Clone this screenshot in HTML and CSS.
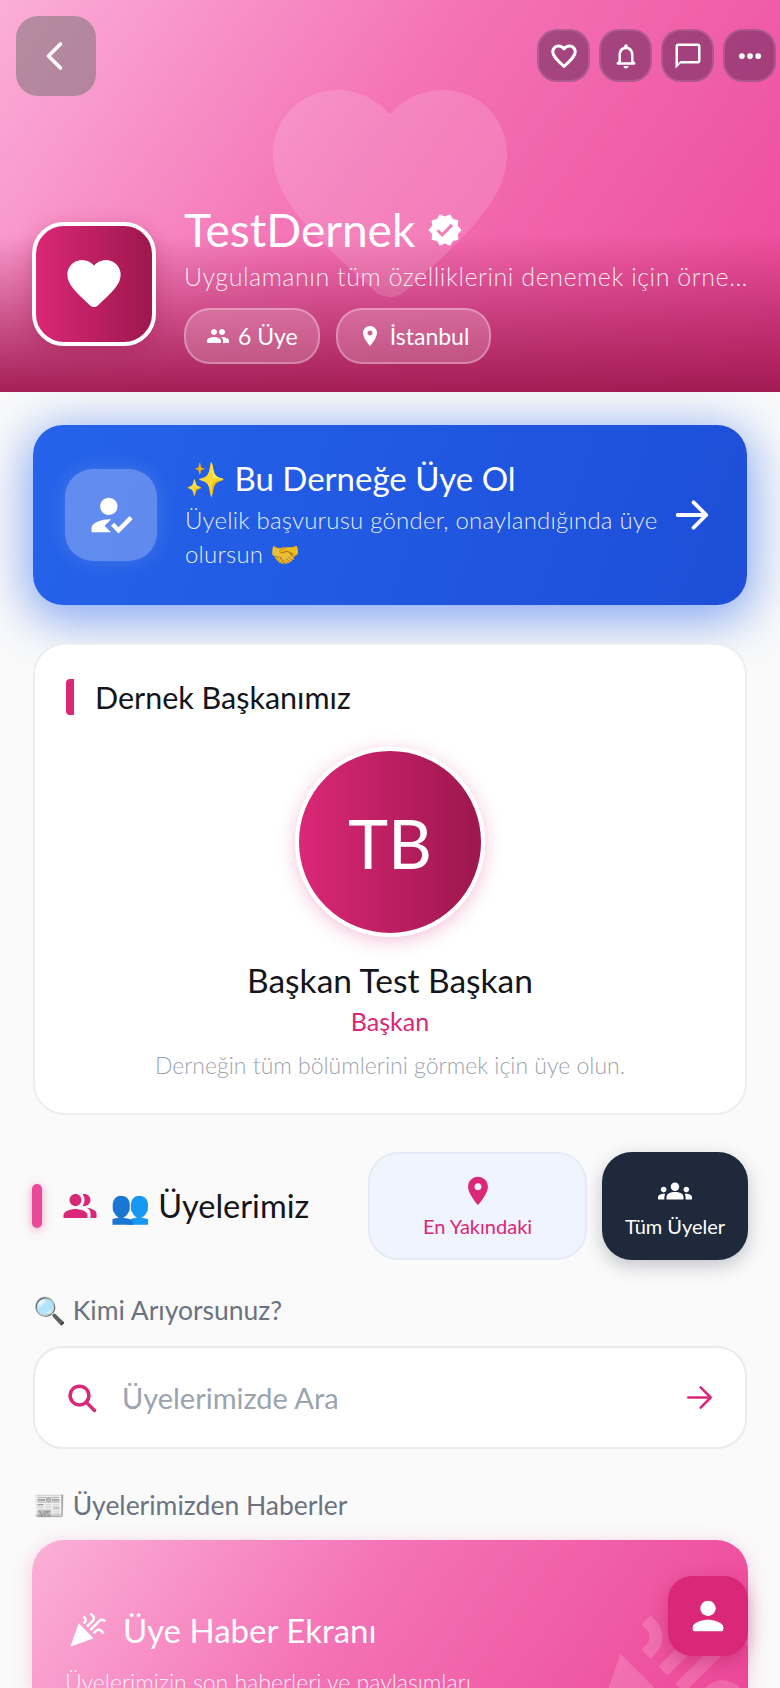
FILE: index.html
```html
<!DOCTYPE html>
<html lang="tr">
  <head>
    <meta charset="utf-8" />
    <title>TestDernek</title>
    <link rel="stylesheet" href="styles.css">
  </head>
  <body>
    <header class="hero">
      <svg class="hero-watermark" viewBox="2 3 20 17.65" preserveAspectRatio="none"><path d="M13.35 20.13c-.76.69-1.93.69-2.69-.01l-.11-.1C5.3 15.27 1.87 12.16 2 8.28c.06-1.7.93-3.33 2.34-4.29 2.64-1.8 5.9-.96 7.66 1.1 1.76-2.06 5.02-2.91 7.66-1.1 1.41.96 2.28 2.59 2.34 4.29.14 3.88-3.3 6.99-8.55 11.76l-.1.09z"/></svg>
      <div class="hero-top">
        <button class="back-btn">
          <svg viewBox="0 0 24 24" class="line-icon"><path d="M15 4l-8 8 8 8"/></svg>
        </button>
        <div class="hero-actions">
          <button class="action-btn">
            <svg viewBox="0 0 24 24" class="line-icon"><path d="M12 20.3l-1.2-1.1C6 14.8 3 12 3 8.6 3 6 5.1 4 7.6 4c1.7 0 3.400.9 4.400 2.300C13 4.900 14.700 4 16.400 4 18.900 4 21 6 21 8.600c0 3.400-3 6.200-7.800 10.600L12 20.300z"/></svg>
          </button>
          <button class="action-btn">
            <svg viewBox="0 0 24 24" class="fill-icon"><path d="M19.290 17.290L18 16v-5c0-3.070-1.640-5.640-4.500-6.320V4c0-.83-.67-1.500-1.500-1.500s-1.500.67-1.500 1.500v.68C7.630 5.360 6 7.920 6 11v5l-1.290 1.290c-.63.63-.19 1.710.7 1.710h13.170c.9 0 1.340-1.080.71-1.710zM16 17H8v-6c0-2.480 1.510-4.500 4-4.500s4 2.020 4 4.500v6zm-4 5c1.100 0 2-.9 2-2h-4c0 1.100.9 2 2 2z"/></svg>
          </button>
          <button class="action-btn">
            <svg viewBox="0 0 24 24" class="fill-icon"><path d="M20 2H4c-1.100 0-2 .9-2 2v18l4-4h14c1.100 0 2-.9 2-2V4c0-1.100-.9-2-2-2zm0 14H6l-2 2V4h16v12z"/></svg>
          </button>
          <button class="action-btn">
            <svg viewBox="0 0 24 24" class="fill-icon"><circle cx="5.500" cy="12" r="2.300"/><circle cx="12" cy="12" r="2.300"/><circle cx="18.500" cy="12" r="2.300"/></svg>
          </button>
        </div>
      </div>
      <div class="hero-info">
        <div class="org-logo">
          <svg viewBox="0 0 24 24" class="fill-icon"><path d="M13.350 20.130c-.76.69-1.930.69-2.690-.01l-.11-.1C5.300 15.270 1.870 12.160 2 8.280c.06-1.700.93-3.330 2.340-4.290 2.640-1.800 5.900-.96 7.660 1.100 1.760-2.060 5.020-2.910 7.660-1.100 1.410.96 2.280 2.590 2.340 4.290.14 3.880-3.300 6.990-8.550 11.760l-.1.09z"/></svg>
        </div>
        <div class="org-text">
          <h1 class="org-name">TestDernek
            <svg viewBox="0 0 24 24" class="verified"><path d="M23 12l-2.440-2.790.34-3.690-3.610-.82-1.890-3.200L12 2.960 8.600 1.500 6.710 4.690 3.100 5.500l.34 3.700L1 12l2.440 2.790-.34 3.700 3.610.82L8.600 22.500l3.400-1.470 3.400 1.460 1.890-3.190 3.610-.82-.34-3.690L23 12zm-12.910 4.720l-3.800-3.810 1.480-1.480 2.320 2.330 5.850-5.870 1.480 1.480-7.330 7.350z"/></svg>
          </h1>
          <p class="org-desc">Uygulamanın tüm özelliklerini denemek için örnek dernek hesabı</p>
          <div class="chips">
            <span class="chip">
              <svg viewBox="0 0 24 24" class="fill-icon"><path d="M16 11c1.660 0 2.990-1.340 2.990-3S17.660 5 16 5s-3 1.340-3 3 1.340 3 3 3zm-8 0c1.660 0 2.990-1.340 2.990-3S9.660 5 8 5 5 6.340 5 8s1.340 3 3 3zm0 2c-2.330 0-7 1.170-7 3.500V18c0 .55.45 1 1 1h12c.55 0 1-.45 1-1v-1.500c0-2.330-4.670-3.500-7-3.500zm8 0c-.29 0-.62.02-.97.05.02.01.03.03.04.04 1.140.83 1.930 1.940 1.930 3.410V18c0 .35-.07.69-.18 1H22c.55 0 1-.45 1-1v-1.500c0-2.330-4.670-3.500-7-3.500z"/></svg>
              6 Üye
            </span>
            <span class="chip">
              <svg viewBox="0 0 24 24" class="fill-icon"><path d="M12 2C8.130 2 5 5.130 5 9c0 5.250 7 13 7 13s7-7.750 7-13c0-3.870-3.130-7-7-7zm0 9.500c-1.380 0-2.500-1.120-2.500-2.500s1.120-2.500 2.500-2.500 2.500 1.120 2.500 2.500-1.120 2.500-2.500 2.500z"/></svg>
              İstanbul
            </span>
          </div>
        </div>
      </div>
    </header>

    <main class="content">
      <section class="join-card">
        <div class="join-icon">
          <svg viewBox="0 0 24 24" class="fill-icon"><path d="M9 17l3-2.940c-.39-.04-.68-.06-1-.06-2.670 0-8 1.340-8 4v2h9l-3-3zm2-5c2.210 0 4-1.790 4-4s-1.790-4-4-4-4 1.790-4 4 1.790 4 4 4zm4.470 8.500L12 17l1.400-1.410 2.070 2.080 5.130-5.170 1.400 1.410z"/></svg>
        </div>
        <div class="join-text">
          <h2 class="join-title">✨ Bu Derneğe Üye Ol</h2>
          <p class="join-desc">Üyelik başvurusu gönder, onaylandığında üye olursun 🤝</p>
        </div>
        <svg viewBox="0 0 24 24" class="line-icon join-arrow"><path d="M3 12h18M13 4l8 8-8 8"/></svg>
      </section>

      <section class="president-card">
        <h3 class="card-title">Dernek Başkanımız</h3>
        <div class="avatar">TB</div>
        <div class="president-name">Başkan Test Başkan</div>
        <div class="president-role">Başkan</div>
        <p class="president-note">Derneğin tüm bölümlerini görmek için üye olun.</p>
      </section>

      <section class="members-row">
        <div class="members-title">
          <span class="title-bar"></span>
          <svg viewBox="0 0 24 24" class="group-icon"><path d="M16.670 13.130C18.040 14.060 19 15.320 19 17v3h4v-3c0-2.180-3.570-3.470-6.330-3.870zM15 12c2.210 0 4-1.790 4-4s-1.790-4-4-4c-.47 0-.91.1-1.330.24C14.500 5.270 15 6.580 15 8s-.5 2.730-1.330 3.760c.42.14.86.24 1.330.24zM9 12c2.210 0 4-1.790 4-4s-1.790-4-4-4-4 1.790-4 4 1.790 4 4 4zM9 14c-2.670 0-8 1.340-8 4v2h16v-2c0-2.660-5.330-4-8-4z"/></svg>
          <span>👥 Üyelerimiz</span>
        </div>
        <button class="tab tab-near">
          <svg viewBox="0 0 24 24"><path d="M12 2C8.130 2 5 5.130 5 9c0 5.250 7 13 7 13s7-7.750 7-13c0-3.870-3.130-7-7-7zm0 9.500c-1.380 0-2.500-1.120-2.500-2.500s1.120-2.500 2.500-2.500 2.500 1.120 2.500 2.500-1.120 2.500-2.500 2.500z"/></svg>
          En Yakındaki
        </button>
        <button class="tab tab-all">
          <svg viewBox="0 0 24 24"><path d="M12 12.750c1.630 0 3.070.39 4.240.9 1.080.48 1.760 1.560 1.760 2.730V18H6v-1.610c0-1.180.68-2.260 1.760-2.730 1.170-.52 2.610-.91 4.240-.91zM4 13c1.100 0 2-.9 2-2s-.9-2-2-2-2 .9-2 2 .9 2 2 2zm1.130 1.100C4.760 14.040 4.390 14 4 14c-.99 0-1.930.21-2.780.58C.48 14.900 0 15.620 0 16.430V18h4.500v-1.610c0-.83.23-1.610.63-2.290zM20 13c1.100 0 2-.9 2-2s-.9-2-2-2-2 .9-2 2 .9 2 2 2zm4 3.430c0-.81-.48-1.530-1.220-1.850-.85-.37-1.790-.58-2.780-.58-.39 0-.76.04-1.130.1.4.68.63 1.460.63 2.290V18H24v-1.570zM12 6c1.660 0 3 1.340 3 3s-1.340 3-3 3-3-1.340-3-3 1.340-3 3-3z"/></svg>
          Tüm Üyeler
        </button>
      </section>

      <h4 class="label">🔍 Kimi Arıyorsunuz?</h4>
      <div class="search-box">
        <svg viewBox="0 0 24 24" class="line-icon search-icon"><circle cx="10" cy="10" r="7.500"/><path d="M15.500 15.500L22 22"/></svg>
        <span class="search-text">Üyelerimizde Ara</span>
        <svg viewBox="0 0 24 24" class="line-icon search-arrow"><path d="M2 12h20M13 3l9 9-9 9"/></svg>
      </div>

      <h4 class="label label-news">📰 Üyelerimizden Haberler</h4>
      <section class="news-card">
        <svg viewBox="0 0 24 24" class="news-watermark"><path d="M2 22l14-5L7 8 2 22zm12.530-9.470l5.590-5.590c.49-.49 1.280-.49 1.770 0l.59.59 1.060-1.060-.59-.59c-1.070-1.070-2.820-1.070-3.890 0l-5.590 5.590 1.060 1.060zM10.060 6.880l-.59.59 1.060 1.060.59-.59c1.070-1.070 1.070-2.820 0-3.890l-.59-.59-1.060 1.060.59.59c.48.48.48 1.280 0 1.770zm7 5l-1.590 1.590 1.060 1.060 1.590-1.590c.49-.49 1.280-.49 1.770 0l1.610 1.610 1.060-1.060-1.610-1.610c-1.080-1.070-2.820-1.070-3.890 0zm-2-6l-3.590 3.590 1.060 1.060 3.590-3.590c1.070-1.070 1.070-2.820 0-3.890l-1.590-1.590-1.060 1.060 1.590 1.590c.48.49.48 1.290 0 1.770z"/></svg>
        <h2 class="news-title">
          <svg viewBox="0 0 24 24" class="fill-icon"><path d="M2 22l14-5L7 8 2 22zm12.530-9.470l5.590-5.590c.49-.49 1.280-.49 1.770 0l.59.59 1.060-1.060-.59-.59c-1.070-1.070-2.820-1.070-3.890 0l-5.590 5.590 1.060 1.060zM10.060 6.880l-.59.59 1.060 1.060.59-.59c1.070-1.070 1.070-2.820 0-3.890l-.59-.59-1.060 1.060.59.59c.48.48.48 1.280 0 1.770zm7 5l-1.590 1.590 1.060 1.060 1.590-1.590c.49-.49 1.280-.49 1.770 0l1.610 1.610 1.060-1.060-1.610-1.610c-1.080-1.070-2.820-1.070-3.890 0zm-2-6l-3.590 3.590 1.060 1.060 3.590-3.590c1.070-1.070 1.070-2.820 0-3.890l-1.590-1.590-1.060 1.060 1.590 1.590c.48.49.48 1.290 0 1.770z"/></svg>
          Üye Haber Ekranı
        </h2>
        <p class="news-desc">Üyelerimizin son haberleri ve paylaşımları</p>
      </section>
    </main>

    <button class="fab">
      <svg viewBox="0 0 24 24" class="fill-icon"><path d="M12 12c2.210 0 4-1.790 4-4s-1.790-4-4-4-4 1.790-4 4 1.790 4 4 4zm0 2c-2.670 0-8 1.340-8 4v1c0 .55.45 1 1 1h14c.55 0 1-.45 1-1v-1c0-2.660-5.330-4-8-4z"/></svg>
    </button>
  </body>
</html>
```

FILE: styles.css
```css
* {
  box-sizing: border-box;
  font-family: Lato, "Noto Sans", sans-serif;
}
html,
body {
  margin: 0;
  padding: 0;
  height: 1688px;
  overflow: hidden;
  background: #fafafa;
}
h1,
h2,
h3,
h4,
p {
  margin: 0;
  font-weight: 400;
}
button {
  border: 0;
  padding: 0;
  background: none;
}
.fill-icon {
  fill: #fff;
}
.line-icon {
  fill: none;
  stroke: #fff;
  stroke-width: 2.4;
  stroke-linecap: round;
  stroke-linejoin: round;
}

/* hero */
.hero {
  position: relative;
  z-index: 1;
  height: 392px;
  padding: 16px 4px 28px 32px;
  display: flex;
  flex-direction: column;
  justify-content: space-between;
  overflow: hidden;
  background: linear-gradient(180deg, rgba(157, 23, 77, 0) 60%, rgba(157, 23, 77, 0.92) 100%),
    linear-gradient(125deg, #fbaed8 0%, #f472b6 45%, #ec4899 100%);
}
.hero-watermark {
  position: absolute;
  left: 273px;
  top: 90px;
  width: 234px;
  height: 207px;
  fill: rgba(255, 255, 255, 0.14);
}
.hero-top {
  position: relative;
  display: flex;
  justify-content: space-between;
  align-items: flex-start;
  margin-left: -16px;
}
.back-btn {
  width: 80px;
  height: 80px;
  border-radius: 22px;
  background: rgba(110, 110, 110, 0.5);
  display: flex;
  align-items: center;
  justify-content: center;
}
.back-btn svg {
  width: 36px;
  height: 36px;
}
.hero-actions {
  display: flex;
  gap: 9px;
  margin-top: 13px;
}
.action-btn {
  width: 53px;
  height: 53px;
  border-radius: 20px;
  background: rgba(100, 40, 90, 0.55);
  border: 2px solid rgba(255, 255, 255, 0.12);
  display: flex;
  align-items: center;
  justify-content: center;
}
.action-btn svg {
  width: 30px;
  height: 30px;
}
.hero-info {
  position: relative;
  display: flex;
  align-items: center;
  gap: 28px;
}
.org-logo {
  flex: none;
  width: 124px;
  height: 124px;
  margin-top: 2px;
  border-radius: 32px;
  border: 4px solid #fff;
  background: linear-gradient(90deg, #db2777, #9d174d);
  box-shadow: 0 6px 20px rgba(157, 23, 77, 0.35);
  display: flex;
  align-items: center;
  justify-content: center;
}
.org-logo svg {
  width: 64px;
  height: 64px;
}
.org-text {
  min-width: 0;
  width: 564px;
}
.org-name {
  display: flex;
  align-items: center;
  gap: 12px;
  font-size: 46px;
  line-height: 56px;
  color: #fff;
}
.verified {
  width: 36px;
  height: 36px;
  fill: #fff;
}
.org-desc {
  margin-top: 2px;
  font-size: 25px;
  line-height: 32px;
  font-weight: 300;
  letter-spacing: 0.55px;
  color: rgba(255, 255, 255, 0.88);
  white-space: nowrap;
  overflow: hidden;
  text-overflow: ellipsis;
}
.chips {
  display: flex;
  gap: 16px;
  margin-top: 16px;
}
.chip {
  height: 56px;
  padding: 0 20px;
  border-radius: 26px;
  border: 2px solid rgba(255, 255, 255, 0.3);
  background: rgba(255, 255, 255, 0.2);
  display: flex;
  align-items: center;
  gap: 8px;
  font-size: 23px;
  color: #fff;
}
.chip svg {
  width: 24px;
  height: 24px;
}

/* page body */
.content {
  padding: 33px 32px 0;
}
.join-card {
  height: 180px;
  margin: 0 1px;
  padding: 0 32px;
  border-radius: 30px;
  background: linear-gradient(110deg, #2563eb, #1d4ed8);
  box-shadow: 0 10px 50px 6px rgba(37, 99, 235, 0.55);
  display: flex;
  align-items: center;
  gap: 28px;
}
.join-icon {
  flex: none;
  width: 92px;
  height: 92px;
  border-radius: 28px;
  background: rgba(255, 255, 255, 0.28);
  box-shadow: 0 0 20px rgba(255, 255, 255, 0.15);
  display: flex;
  align-items: center;
  justify-content: center;
}
.join-icon svg {
  width: 52px;
  height: 52px;
}
.join-text {
  flex: 1;
  min-width: 0;
  margin-top: -2px;
}
.join-title {
  font-size: 33px;
  line-height: 42px;
  color: #fff;
}
.join-desc {
  margin-top: 4px;
  font-size: 24px;
  line-height: 34px;
  font-weight: 300;
  letter-spacing: 0.2px;
  color: rgba(255, 255, 255, 0.9);
}
.join-arrow {
  flex: none;
  width: 38px;
  height: 38px;
  margin-left: -20px;
  margin-right: 4px;
}
.president-card {
  height: 472px;
  margin: 38px 1px 0;
  padding: 34px 31px 0;
  border-radius: 32px;
  border: 2px solid #eceef0;
  background: #fff;
  text-align: center;
}
.card-title {
  height: 36px;
  padding-left: 21px;
  border-left: 8px solid #db2777;
  border-radius: 4px;
  font-size: 30.5px;
  line-height: 36px;
  text-align: left;
  color: #14151a;
}
.avatar {
  width: 190px;
  height: 190px;
  margin: 32px auto 0;
  border-radius: 50%;
  border: 4px solid #fff;
  background: linear-gradient(90deg, #db2777, #9d174d);
  box-shadow: 0 4px 18px rgba(219, 39, 119, 0.28);
  display: flex;
  align-items: center;
  justify-content: center;
  font-size: 68px;
  color: #fff;
}
.president-name {
  margin-top: 21px;
  font-size: 33.5px;
  line-height: 44px;
  color: #14151a;
}
.president-role {
  margin-top: 3px;
  font-size: 25px;
  line-height: 32px;
  color: #db2777;
}
.president-note {
  margin-top: 13px;
  font-size: 23px;
  line-height: 30px;
  font-weight: 300;
  color: #9ca3af;
}
.members-row {
  display: flex;
  align-items: center;
  margin-top: 37px;
}
.members-title {
  flex: 1;
  display: flex;
  align-items: center;
  font-size: 32.5px;
  color: #14151a;
}
.title-bar {
  width: 10px;
  height: 44px;
  margin-right: 20px;
  border-radius: 5px;
  background: #ec4899;
  box-shadow: 0 2px 10px rgba(236, 72, 153, 0.5);
}
.group-icon {
  width: 36px;
  height: 36px;
  margin-right: 12px;
  fill: #db2777;
}
.tab {
  height: 108px;
  border-radius: 30px;
  display: flex;
  flex-direction: column;
  align-items: center;
  justify-content: center;
  gap: 6px;
  font-size: 20px;
}
.tab svg {
  width: 34px;
  height: 34px;
}
.tab-near {
  width: 219px;
  margin-right: 15px;
  border: 2px solid #e6eaf6;
  background: #f0f4ff;
  color: #db2777;
}
.tab-near svg {
  fill: #db2777;
}
.tab-all {
  width: 146px;
  background: #1e293b;
  box-shadow: 0 6px 18px rgba(30, 41, 59, 0.25);
  color: #fff;
}
.tab-all svg {
  fill: #fff;
}
.label {
  margin: 32px 1px 0;
  font-size: 26.5px;
  line-height: 36px;
  color: #6b7280;
}
.search-box {
  height: 103px;
  margin: 18px 1px 0;
  padding: 0 32px 0 32px;
  border-radius: 30px;
  border: 2px solid #e9ebee;
  background: #fff;
  display: flex;
  align-items: center;
}
.search-icon {
  width: 30px;
  height: 30px;
  stroke: #db2777;
  stroke-width: 2.8;
}
.search-text {
  flex: 1;
  margin-left: 25px;
  font-size: 29px;
  color: #9ca3af;
}
.search-arrow {
  width: 27px;
  height: 27px;
  stroke: #db2777;
  stroke-width: 2.2;
}
.label-news {
  margin-top: 38px;
}
.news-card {
  position: relative;
  height: 148px;
  margin-top: 17px;
  padding: 66px 33px 0;
  border-radius: 32px 32px 0 0;
  overflow: hidden;
  background: linear-gradient(125deg, #fbb0d8 0%, #f472b6 45%, #ec4899 100%);
  box-shadow: 0 4px 20px rgba(236, 72, 153, 0.25);
}
.news-watermark {
  position: absolute;
  left: 529px;
  top: 46px;
  width: 204px;
  height: 204px;
  fill: rgba(255, 255, 255, 0.16);
}
.news-title {
  position: relative;
  display: flex;
  align-items: center;
  gap: 16px;
  font-size: 33px;
  line-height: 48px;
  color: #fff;
}
.news-title svg {
  width: 40px;
  height: 40px;
  margin-left: 2px;
}
.news-desc {
  position: relative;
  margin-top: 14px;
  font-size: 23px;
  font-weight: 300;
  color: rgba(255, 255, 255, 0.9);
}
.fab {
  position: fixed;
  left: 668px;
  top: 1576px;
  z-index: 2;
  width: 80px;
  height: 80px;
  border-radius: 24px;
  background: #db2777;
  box-shadow: 0 6px 18px rgba(157, 23, 77, 0.35);
  display: flex;
  align-items: center;
  justify-content: center;
}
.fab svg {
  width: 46px;
  height: 46px;
}
```
